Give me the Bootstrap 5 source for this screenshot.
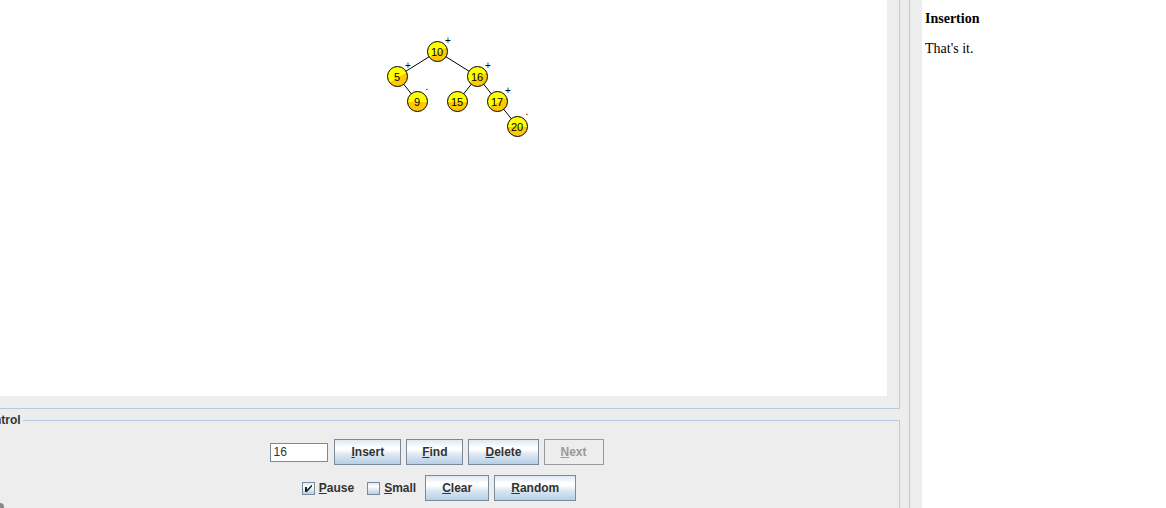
<!DOCTYPE html>
<html lang="en">
<head>
<meta charset="utf-8">
<meta name="viewport" content="width=device-width, initial-scale=1">
<title>AVL tree</title>
<link href="https://cdn.jsdelivr.net/npm/bootstrap@5.3.0/dist/css/bootstrap.min.css" rel="stylesheet">
<style>
  :root { --panel: #ededed; --rule: #b8cae0; --edge: #7a8a99; --ink: #333; }
  body { background: var(--panel); color: var(--ink); font: bold 12px/16px "Liberation Sans", Arial, sans-serif; }
  .workspace { margin-left: -26px; padding-right: 9px; min-width: 0; border-right: 1px solid var(--rule); }
  .view-frame { padding: 0 12px 12px 0; border: solid var(--rule); border-width: 0 1px 1px 0; }
  .tree-canvas { background: #fff; padding-top: 30px; min-height: 160px; }
  .tree-canvas line { stroke: #000; }
  .tree-canvas circle { stroke: #000; }
  .tree-canvas text { font-weight: 400; fill: #000; text-anchor: middle; }
  .keys { font-size: 11px; }
  .marks { font-size: 10px; }
  .control-box { border: 1px solid var(--rule); border-bottom: 0; margin-top: 3px; padding: 11px 3px 7px; }
  .control-box legend { float: none; width: auto; margin: 0; padding: 0 2px 0 0; font-size: 12px; line-height: 16px; }
  .tool-row { gap: 5px; }
  .tool-row + .tool-row { margin-top: 10px; }
  .key-input { width: 58px; height: 19px; margin-right: 1px; padding: 0 2px; border: 1px solid var(--edge); border-radius: 0; background: #fff; color: var(--ink); font-weight: 400; font-size: 12px; line-height: 16px; }
  .btn-metal { --bs-btn-font-size: 12px; --bs-btn-line-height: 16px; --bs-btn-font-weight: 700; --bs-btn-padding-x: 16px; --bs-btn-padding-y: 4px;
    --bs-btn-border-radius: 0; --bs-btn-border-color: var(--edge); --bs-btn-color: var(--ink); --bs-btn-hover-border-color: var(--edge);
    --bs-btn-disabled-color: #999; --bs-btn-disabled-border-color: #999; --bs-btn-disabled-opacity: 1;
    background: linear-gradient(#dde8f3, #fff 30%, #fff 40%, #dce8f2 60%, #b8cfe5); }
  .btn-metal:disabled { background: none; }
  .btn-narrow { --bs-btn-padding-x: 15px; }
  .tick { appearance: none; width: 13px; height: 13px; margin: 0 4px 0 0; border: 1px solid var(--edge); background: linear-gradient(#dde8f3, #fff 30%, #b8cfe5); }
  .tick:checked { background: url("data:image/svg+xml,%3Csvg xmlns='http://www.w3.org/2000/svg' viewBox='0 0 11 11'%3E%3Cpath d='M2 4h2v2.5L8.5 2H9v1.5L4 9H2z' fill='%23222'/%3E%3C/svg%3E"), linear-gradient(#dde8f3, #fff 30%, #b8cfe5); }
  .notes-pane { flex: 0 0 256px; padding-left: 12px; }
  .notes { background: #fff; color: #000; padding: 9px 3px; font: 14px/20px "Liberation Serif", "Times New Roman", serif; }
  .notes h1 { font-size: 14px; line-height: 20px; font-weight: 700; margin: 0 0 10px; }
  .corner { bottom: 0; left: 0; width: 4px; height: 5px; background: #888; border-top-right-radius: 4px; }
</style>
</head>
<body>
<div class="d-flex min-vh-100 overflow-hidden position-relative">
  <main class="workspace flex-grow-1 d-flex flex-column">
    <div class="view-frame flex-grow-1 d-flex">
      <div class="tree-canvas flex-grow-1 d-flex justify-content-center align-items-start">
        <svg width="201" height="110" viewBox="330 30 201 110" role="img" aria-label="Balanced search tree">
          <defs>
            <linearGradient id="flat" x1="0" y1="0" x2="0" y2="1"><stop offset=".5" stop-color="#ff0"/><stop offset=".5" stop-color="#ffc800"/></linearGradient>
            <linearGradient id="slant" x1=".2" y1="0" x2=".8" y2="1"><stop offset=".55" stop-color="#ff0"/><stop offset=".55" stop-color="#ffc800"/></linearGradient>
          </defs>
          <g>
            <line x1="437.5" y1="51.5" x2="397.5" y2="76.5"/><line x1="437.5" y1="51.5" x2="477.5" y2="76.5"/>
            <line x1="397.5" y1="76.5" x2="417.5" y2="101.5"/><line x1="477.5" y1="76.5" x2="457.5" y2="101.5"/>
            <line x1="477.5" y1="76.5" x2="497.5" y2="101.5"/><line x1="497.5" y1="101.5" x2="517.5" y2="126.5"/>
          </g>
          <g fill="url(#slant)">
            <circle cx="437.5" cy="51.5" r="10"/><circle cx="397.5" cy="76.5" r="10"/>
            <circle cx="477.5" cy="76.5" r="10"/><circle cx="497.5" cy="101.5" r="10"/>
          </g>
          <g fill="url(#flat)">
            <circle cx="417.5" cy="101.5" r="10"/><circle cx="457.5" cy="101.5" r="10"/><circle cx="517.5" cy="126.5" r="10"/>
          </g>
          <g class="keys">
            <text x="437" y="56">10</text><text x="397" y="81">5</text><text x="477" y="81">16</text><text x="417" y="106">9</text>
            <text x="457" y="106">15</text><text x="497" y="106">17</text><text x="517" y="131">20</text>
          </g>
          <g class="marks">
            <text x="448" y="44">+</text><text x="408" y="69">+</text><text x="488" y="69">+</text><text x="508" y="94">+</text>
            <text x="427" y="90">.</text><text x="527" y="115">.</text>
          </g>
        </svg>
      </div>
    </div>
    <fieldset class="control-box">
      <legend>Control</legend>
      <div class="tool-row d-flex justify-content-center align-items-center">
        <input class="key-input" type="text" value="16" aria-label="Key">
        <button type="button" class="btn btn-metal"><u>I</u>nsert</button>
        <button type="button" class="btn btn-metal btn-narrow"><u>F</u>ind</button>
        <button type="button" class="btn btn-metal"><u>D</u>elete</button>
        <button type="button" class="btn btn-metal" disabled><u>N</u>ext</button>
      </div>
      <div class="tool-row d-flex justify-content-center align-items-center ps-1">
        <label class="d-flex align-items-center me-2" for="pause"><input class="tick" type="checkbox" id="pause" checked><span><u>P</u>ause</span></label>
        <label class="d-flex align-items-center me-1" for="small-nodes"><input class="tick" type="checkbox" id="small-nodes"><span><u>S</u>mall</span></label>
        <button type="button" class="btn btn-metal"><u>C</u>lear</button>
        <button type="button" class="btn btn-metal"><u>R</u>andom</button>
      </div>
    </fieldset>
  </main>
  <aside class="notes-pane d-flex">
    <div class="notes flex-grow-1">
      <h1>Insertion</h1>
      <p class="mb-0">That's it.</p>
    </div>
  </aside>
  <div class="corner position-absolute"></div>
</div>
<script src="https://cdn.jsdelivr.net/npm/bootstrap@5.3.0/dist/js/bootstrap.bundle.min.js"></script>
</body>
</html>
